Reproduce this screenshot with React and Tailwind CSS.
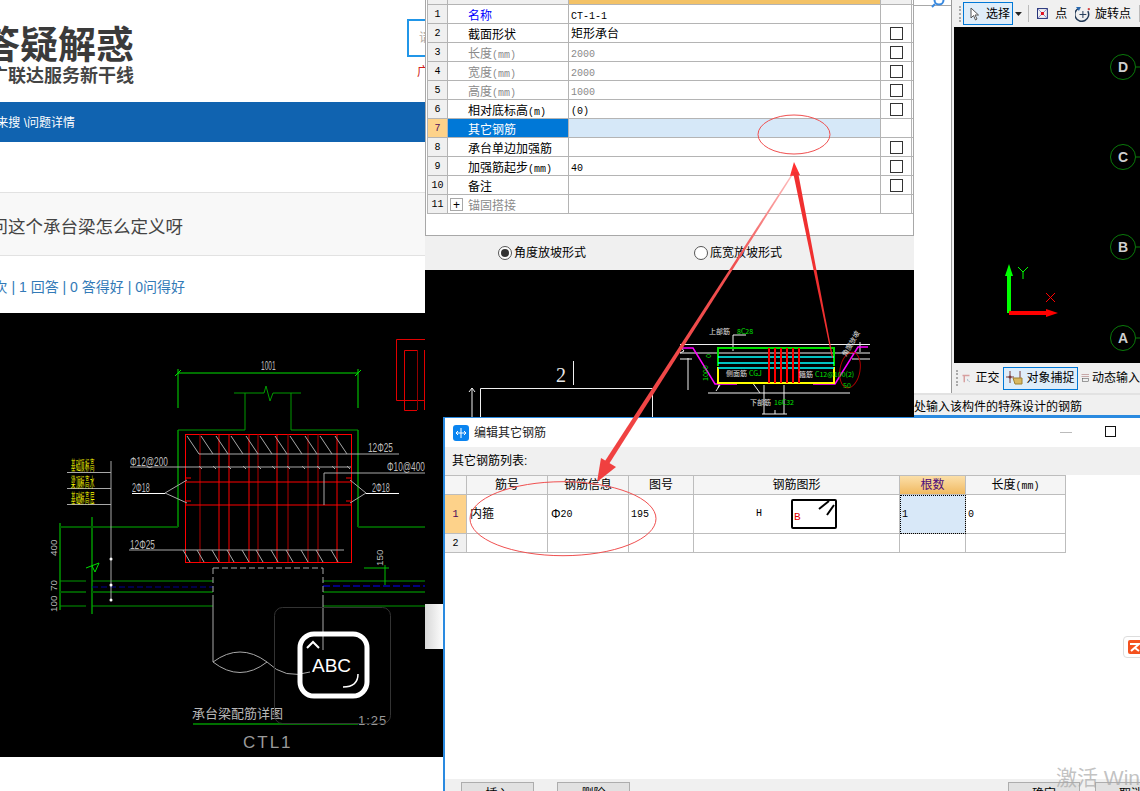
const FONT = "font-['Liberation_Sans','Noto_Sans_CJK_SC',sans-serif]";

function Mixed({ text, muted }) {
  const parts = text.split(/([\x20-\x7e]+)/).filter(Boolean);
  return (
    <span className={muted ? "text-[#8a8a8a]" : ""}>
      {parts.map((p, i) =>
        /^[\x20-\x7e]+$/.test(p) ? (
          <span key={i} className="font-['Liberation_Mono',monospace] text-[10px]">{p}</span>
        ) : (
          <span key={i} className="text-[12px]">{p}</span>
        )
      )}
    </span>
  );
}

const attrs = [
  { n: "1", name: "名称", val: "CT-1-1", blue: true, noBox: true },
  { n: "2", name: "截面形状", val: "矩形承台" },
  { n: "3", name: "长度(mm)", val: "2000", muted: true },
  { n: "4", name: "宽度(mm)", val: "2000", muted: true },
  { n: "5", name: "高度(mm)", val: "1000", muted: true },
  { n: "6", name: "相对底标高(m)", val: "(0)" },
  { n: "7", name: "其它钢筋", val: "", sel: true, noBox: true },
  { n: "8", name: "承台单边加强筋", val: "" },
  { n: "9", name: "加强筋起步(mm)", val: "40" },
  { n: "10", name: "备注", val: "" },
  { n: "11", name: "锚固搭接", val: "", muted: true, noBox: true, plus: true },
];

function AttrRow({ r }) {
  return (
    <div className="grid grid-cols-[21px_121px_312px_31px] h-[19px] border-b border-[#b4b4b4] leading-[22px] text-black">
      <div className={`border-r border-l border-[#b4b4b4] text-center leading-[17px] ${r.sel ? "bg-[#fdd28a] text-[#4b0a5a]" : "bg-[#f0f0f0]"}`}>
        <span className="font-['Liberation_Mono',monospace] text-[10px]">{r.n}</span>
      </div>
      <div className={`relative border-r border-[#b4b4b4] pl-[20px] whitespace-nowrap overflow-hidden ${r.sel ? "bg-[#0078d7] text-white" : ""} ${r.blue ? "text-[#0000ff]" : ""}`}>
        {r.plus && (
          <span className="absolute left-[2px] top-[3px] w-[13px] h-[13px] border border-[#a8a8a8] flex items-center justify-center text-[12px] leading-none text-black">+</span>
        )}
        <Mixed text={r.name} muted={r.muted} />
      </div>
      <div className={`border-r border-[#b4b4b4] pl-[2px] whitespace-nowrap leading-[20px] overflow-hidden ${r.sel ? "bg-[#d6e8f8]" : ""}`}>
        <Mixed text={r.val} muted={r.muted} />
      </div>
      <div className="border-r border-[#b4b4b4] flex items-center justify-center">
        {!r.noBox && <span className="w-[13px] h-[13px] border border-[#333] bg-white" />}
      </div>
    </div>
  );
}

function LeftCad() {
  const reds = [200, 219, 229, 249, 258, 277, 288, 308, 318, 337];
  const tops = [187, 201, 216, 231, 246, 260, 275, 290, 305, 320, 335];
  const cond = "font-['Liberation_Sans',sans-serif]";
  return (
    <svg viewBox="0 313 444 444" className="block w-[444px] h-[444px] bg-black" fill="none">
      <g stroke="#00e000" strokeWidth="1">
        <path d="M178 373H358M178 369V408M358 369V408M175 376L181 370M355 376L361 370" />
        <path d="M178 430V527M358 430V527" />
        <path d="M60 523V610M92 517V614M86 568L99 563L95 572L92 566" />
      </g>
      <g stroke="#009a00" strokeWidth="1">
        <path d="M234 393H264L266 386L270 401L273 393H301M245 393V430H178M291 393V430H358" />
        <path d="M60 581H86M92 581H213M60 606H86M92 606H213M323 581H425M323 606H425" />
        <path d="M60 527H178M358 527H425M60 592H86M92 592H213M323 592H425" stroke="#005a00" strokeWidth="2" />
        <path d="M364 568H389M385 565V585" stroke="#00c000" />
      </g>
      <path d="M92 587H213" stroke="#000090" strokeDasharray="6 3" />
      <path d="M323 586H425" stroke="#0000ff" strokeDasharray="7 3" />
      <g stroke="#ff0000" strokeWidth="1">
        <rect x="185.500" y="434.500" width="166" height="128" />
        {reds.map((x) => (
          <path key={x} d={`M${x} 434V562`} stroke={x % 2 ? "#ff0000" : "#b00000"} />
        ))}
        <path d="M185 482H351M185 505H351" />
        <path d="M185 478H191M185 501H191M346 478H352M346 501H352" />
      </g>
      <path d="M396.500 339.500H425M396.500 339.500V400.500H425M404.500 350.500H417M404.500 350.500V410.500H417M424.500 350V410" stroke="#e00000" />
      <path d="M417.500 350V410" stroke="#900000" />
      <g stroke="#a8a8a8" strokeWidth="1">
        <path d="M199 454H399M130 467H351M324 473H425M324 473V505M129 550H344M111 461V600" />
        <path d="M67 472.500H111M67 488.500H111M67 504.500H111" />
        {tops.map((x) => (
          <path key={x} d={`M${x} 436L${x + 12} 454`} />
        ))}
        {tops.map((x) => (
          <path key={`b${x}`} d={`M${x - 4} 550L${x + 3} 562`} />
        ))}
        {tops.map((x) => (
          <path key={`m${x}`} d={`M${x + 12} 466l3 3`} />
        ))}
        <path d="M165 493L187 480M165 493L187 503M366 493L350 480M366 493L350 503" />
        <path d="M213 568H323M213 568V595M323 568V595" strokeDasharray="6 3" />
        <path d="M213 595V662M323 595V650" />
        <path d="M213 662Q240 642 267 662Q285 680 310 672M213 662Q240 683 267 662" />
      </g>
      <path d="M132 493.500H165M366 493.500H399" stroke="#ffffff" />
      <circle cx="111" cy="559" r="1.500" fill="#fff" />
      <circle cx="111" cy="585" r="1.500" fill="#fff" />
      <circle cx="111" cy="600" r="1.500" fill="#fff" />
      <g fill="#bdbdbd" fontSize="11" className={cond}>
        <text transform="translate(261 370) scale(0.6 1.1)">1001</text>
        <text transform="translate(368 452) scale(0.75 1.1)">12Φ25</text>
        <text transform="translate(130 466) scale(0.75 1.1)">Φ12@200</text>
        <text transform="translate(387 471) scale(0.75 1.1)">Φ10@400</text>
        <text transform="translate(132 492) scale(0.65 1.1)">2Φ18</text>
        <text transform="translate(372 492) scale(0.65 1.1)">2Φ18</text>
        <text transform="translate(130 549) scale(0.75 1.1)">12Φ25</text>
        <text transform="translate(57 556) rotate(-90) scale(0.9 0.9)">400</text>
        <text transform="translate(57 591) rotate(-90) scale(0.9 0.9)">70</text>
        <text transform="translate(57 612) rotate(-90) scale(0.9 0.9)">100</text>
        <text transform="translate(383 566) rotate(-90) scale(0.9 0.9)">150</text>
      </g>
      <g fill="#ffff00" fontSize="12" className={cond}>
        <text transform="translate(71 470) scale(0.38 1.2)">基础顶标高</text>
        <text transform="translate(71 487) scale(0.38 1.2)">梁顶标高水</text>
        <text transform="translate(71 503) scale(0.38 1.2)">基础标高层</text>
      </g>
      <text x="192" y="718" fill="#b8b8b8" fontSize="13">承台梁配筋详图</text>
      <path d="M193 724H358" stroke="#00e000" />
      <text x="358" y="725" fill="#9a9a9a" fontSize="13" className={cond} letterSpacing="1">1:25</text>
      <text x="243" y="748" fill="#9a9a9a" fontSize="17" className={cond} letterSpacing="2">CTL1</text>
      <rect x="274.500" y="607.500" width="116" height="116" rx="8" stroke="#333" />
      <rect x="300" y="634" width="67" height="62" rx="14" stroke="#fff" strokeWidth="5" />
      <path d="M307 648L313 642L319 648" stroke="#fff" strokeWidth="2" />
      <text x="312" y="672" fill="#fff" fontSize="19" className={cond}>ABC</text>
      <path d="M358 674Q358 687 343 687" stroke="#fff" strokeWidth="1.500" />
    </svg>
  );
}

function MidCad() {
  const rs = [769, 775, 781, 787, 793, 799];
  return (
    <svg viewBox="425 270 489 147" className="block w-[489px] h-[147px] bg-black" fill="none">
      <text x="556" y="382" fill="#e8e8e8" fontSize="20" fontFamily="Liberation Serif, serif">2</text>
      <g stroke="#f0f0f0">
        <path d="M573.500 361V385M480.500 417V388.500H652.500V417M472 388V417M469 392L472 388L475 392" />
        <path d="M680 344.500H870M680 346L684 351L680 353H870M680 359H692M852 359H870" />
        <path d="M733 335H746M733 335V351M708 393H850M720 382L718 388M752 382L760 393M764 385V414M784 385V414" />
        <path d="M762 414H787M775 414V410M688 358V390M860 342V352M720 385L716 391" />
      </g>
      <path d="M682 348H693L715 384H737M868 347H858L835 384H813" stroke="#ff00ff" strokeWidth="1.500" />
      <path d="M718 366V348H834V366" stroke="#00e000" strokeWidth="2" />
      <path d="M718 367V383H834V367" stroke="#ffff00" strokeWidth="2" />
      <path d="M718 357H834M718 363H834M718 368H834" stroke="#00ffff" strokeWidth="1.500" />
      {rs.map((x) => (
        <path key={x} d={`M${x} 348V383`} stroke="#ff0000" strokeWidth="2" />
      ))}
      <ellipse cx="850" cy="370" rx="10" ry="18" stroke="#b00000" transform="rotate(10 850 370)" />
      <g fontSize="7" fontFamily="Noto Sans CJK SC, sans-serif">
        <text x="709" y="334" fill="#e0e0e0">上部筋</text>
        <text x="737" y="334" fill="#00e000">8C28</text>
        <text x="726" y="376" fill="#e0e0e0">侧面筋</text>
        <text x="749" y="376" fill="#00e000">CGJ</text>
        <text x="799" y="377" fill="#e0e0e0">箍筋</text>
        <text x="815" y="377" fill="#00e000">C12@100(2)</text>
        <text x="750" y="405" fill="#e0e0e0">下部筋</text>
        <text x="774" y="405" fill="#00e000">16C32</text>
        <text x="843" y="388" fill="#00e000">50</text>
        <text transform="translate(708 381) rotate(-90)" fill="#00e000">1000</text>
        <text transform="translate(711 358) rotate(-90)" fill="#00e000">0</text>
        <text transform="translate(846 357) rotate(-60)" fill="#e0e0e0">角度放坡</text>
      </g>
    </svg>
  );
}

function RightCanvas() {
  const axes = [["D", 67], ["C", 157], ["B", 247], ["A", 338]];
  return (
    <svg viewBox="954 27 186 336" className="block w-[186px] h-[336px] bg-black" fill="none">
      {axes.map(([l, y]) => (
        <g key={l}>
          <circle cx="1123" cy={y} r="12.500" stroke="#0a7a0a" />
          <path d={`M1136 ${y}H1140`} stroke="#0a7a0a" />
          <text x="1123" y={y + 5} textAnchor="middle" fill="#cfcfcf" fontSize="14" fontWeight="700" fontFamily="Liberation Sans, sans-serif">{l}</text>
        </g>
      ))}
      <path d="M1009 313V271" stroke="#00ff00" strokeWidth="4" />
      <path d="M1009 264L1013 276H1005Z" fill="#00ff00" />
      <path d="M1009 313H1048" stroke="#ff0000" strokeWidth="4" />
      <path d="M1058 313L1046 309V317Z" fill="#ff0000" />
      <path d="M1018 267L1023 272L1028 267M1023 272V279" stroke="#00ff00" />
      <path d="M1046 293L1055 302M1055 293L1046 302" stroke="#ff0000" />
    </svg>
  );
}

function Toolbar() {
  return (
    <div className="flex items-center h-[27px] bg-[#f0f0f0] pl-[2px] text-[12px] text-black">
      <span className="w-[2px] h-[16px] border-l-2 border-dotted border-[#aaa] ml-[5px]" />
      <div className="ml-[2px] w-[51px] h-[23px] border border-[#0078d7] bg-[#dfedf9] flex items-center pl-[6px] gap-[6px] text-[12px]">
        <svg width="10" height="14" viewBox="0 0 10 14" fill="none"><path d="M1 1V11L3.500 8.500L5.500 13L7 12L5 8H8.500Z" stroke="#555" fill="#fff" /></svg>
        <span>选择</span>
      </div>
      <svg width="8" height="4" viewBox="0 0 8 4" className="ml-[2px]"><path d="M0 0H7L3.500 4Z" fill="#222" /></svg>
      <span className="ml-[5px] h-[17px] border-l border-[#bcbcbc]" />
      <svg width="11" height="11" viewBox="0 0 11 11" fill="none" className="ml-[8px]"><rect x="0.500" y="0.500" width="10" height="10" stroke="#24327a" /><path d="M1 1L10 10M10 1L1 10" stroke="#8888c8" /><rect x="4" y="4" width="3" height="3" fill="#e01020" /></svg>
      <span className="ml-[7px]">点</span>
      <svg width="16" height="16" viewBox="0 0 16 16" fill="none" className="ml-[8px]"><path d="M4 2A7 7 0 1 0 13 5" stroke="#233b58" strokeWidth="1.500" /><path d="M1 1L6 1L4 5Z" fill="#2a6ab0" /><path d="M8 5V12M4.500 8.500H11.500" stroke="#233b58" /><circle cx="14" cy="3" r="1.200" fill="#d04040" /></svg>
      <span className="ml-[4px] whitespace-nowrap">旋转点</span>
      <span className="ml-[8px] h-[17px] border-l border-[#bcbcbc]" />
    </div>
  );
}

function BottomBar() {
  return (
    <div className="flex items-center h-[30px] bg-[#f0f0f0] text-[12px] text-black whitespace-nowrap overflow-hidden">
      <span className="w-[2px] h-[16px] border-l-2 border-dotted border-[#aaa] ml-[4px]" />
      <svg width="17" height="17" viewBox="0 0 17 17" fill="none" className="ml-[4px]"><path d="M1 2.500H15M4.500 2V16" stroke="#d8a0a0" strokeWidth="3" /><path d="M10 9L13 12L11 13Z" fill="#7a9ab8" /><path d="M13 13L16 16" stroke="#6a8aa8" /></svg>
      <span className="ml-[5px]">正交</span>
      <div className="ml-[3px] w-[75px] h-[23px] border border-[#0078d7] bg-[#dfedf9] flex items-center pl-[2px] gap-[3px] shrink-0">
        <svg width="18" height="18" viewBox="0 0 18 18" fill="none"><path d="M4 2V14M14 2V14M0 8H8" stroke="#7a3a3a" /><circle cx="4" cy="8" r="1.500" fill="#7a3a3a" /><path d="M7 9H16V15H9Z" fill="#d9b860" stroke="#a08030" /></svg>
        <span>对象捕捉</span>
      </div>
      <svg width="17" height="16" viewBox="0 0 17 16" fill="none" className="ml-[3px]"><path d="M1 1H16M1 5H16" stroke="#a06060" /><rect x="2.500" y="8.500" width="12" height="6" stroke="#444" /></svg>
      <span className="ml-[3px]">动态输入</span>
    </div>
  );
}

const cols = "grid grid-cols-[22px_81px_81px_65px_206px_66px_100px]";
const cell = "border-r border-b border-[#bdbdbd] flex items-center";

function Dialog() {
  return (
    <div className="absolute left-[443px] top-[417px] w-[697px] h-[374px] bg-white border-l-2 border-t border-[#2a8ae0] flex flex-col text-black text-[12px]">
      <div className="h-[29px] shrink-0 flex items-center pl-[8px] relative">
        <svg width="16" height="16" viewBox="0 0 16 16" fill="none"><rect width="16" height="16" rx="3" fill="#0a84f0" /><path d="M8 3V13M3 8H13M5 6L3 8L5 10M11 6L13 8L11 10" stroke="#fff" /></svg>
        <span className="ml-[5px] text-[12px] text-[#222]">编辑其它钢筋</span>
        <span className="absolute left-[615px] top-[14px] w-[12px] border-t border-[#bbb]" />
        <span className="absolute left-[660px] top-[8px] w-[11px] h-[11px] border border-[#111]" />
      </div>
      <div className="h-[28px] shrink-0 bg-[#f0f0f0] pl-[7px] flex items-center">其它钢筋列表:</div>
      <div className="flex-1">
        <div className={`${cols} h-[20px] w-[621px] border-t border-[#bdbdbd] bg-[#f5f5f5] text-center`}>
          <div className={cell}></div>
          {["筋号", "钢筋信息", "图号", "钢筋图形"].map((h) => (
            <div key={h} className={`${cell} justify-center`}>{h}</div>
          ))}
          <div className={`${cell} justify-center bg-gradient-to-b from-[#fbdfa8] to-[#f0b95f] text-[#4b0a7a]`}>根数</div>
          <div className={`${cell} justify-center`}><Mixed text="长度(mm)" /></div>
        </div>
        <div className={`${cols} h-[39px] w-[621px]`}>
          <div className={`${cell} justify-center bg-[#fdd28a] text-[#4b0a5a] font-['Liberation_Mono',monospace] text-[10px]`}>1</div>
          <div className={`${cell} pl-[3px]`}>内箍</div>
          <div className={`${cell} pl-[3px]`}>Φ<span className="font-['Liberation_Mono',monospace] text-[10px]">20</span></div>
          <div className={`${cell} pl-[2px] font-['Liberation_Mono',monospace] text-[10px]`}>195</div>
          <div className={`${cell} relative`}>
            <span className="absolute left-[62px] top-[11px] font-['Liberation_Mono',monospace] text-[10px]">H</span>
            <svg width="46" height="30" viewBox="0 0 46 30" fill="none" className="absolute left-[97px] top-[4px]">
              <rect x="1" y="1" width="44" height="28" rx="1" stroke="#000" strokeWidth="2" />
              <path d="M28 10L38 2M36 16L43 6" stroke="#000" strokeWidth="2" />
              <text x="3" y="21" fill="#e00000" fontSize="11" fontFamily="Liberation Mono, monospace">B</text>
            </svg>
          </div>
          <div className="border-r border-b border-[#bdbdbd] flex items-center bg-[#d8e8f8] outline-1 outline-dotted outline-black -outline-offset-1 pl-[2px] font-['Liberation_Mono',monospace] text-[10px]">1</div>
          <div className={`${cell} pl-[2px] font-['Liberation_Mono',monospace] text-[10px]`}>0</div>
        </div>
        <div className={`${cols} h-[19px] w-[621px]`}>
          <div className={`${cell} justify-center bg-[#f0f0f0] font-['Liberation_Mono',monospace] text-[10px]`}>2</div>
          <div className={cell} /><div className={cell} /><div className={cell} /><div className={cell} /><div className={cell} /><div className={cell} />
        </div>
      </div>
      <div className="h-[12px] shrink-0 bg-[#f0f0f0] flex items-start pt-[3px] overflow-visible">
        <div className="ml-[16px] w-[73px] h-[24px] shrink-0 border border-[#adadad] bg-[#e1e1e1] text-center leading-[22px]">插入</div>
        <div className="ml-[23px] w-[73px] h-[24px] shrink-0 border border-[#adadad] bg-[#e1e1e1] text-center leading-[22px]">删除</div>
        <div className="ml-[378px] w-[72px] h-[24px] shrink-0 border border-[#adadad] bg-[#e1e1e1] text-center leading-[22px]">确定</div>
        <div className="ml-[15px] w-[72px] h-[24px] shrink-0 border border-[#adadad] bg-[#e1e1e1] text-center leading-[22px]">取消</div>
      </div>
    </div>
  );
}

export default function App() {
  return (
    <div className={`relative w-[1140px] h-[791px] overflow-hidden bg-white ${FONT}`}>
      {/* web page window */}
      <div className="absolute left-0 top-0 w-[444px]">
        <div className="w-[425px] h-[102px] relative overflow-hidden">
          <div className="w-[134px] pt-[23px] flex flex-col items-end overflow-hidden whitespace-nowrap">
            <div className="text-[38px] leading-[44px] font-bold text-[#3a3a3a]">答疑解惑</div>
            <div className="text-[18px] leading-[20px] font-bold text-[#444] -mt-[1px]">广联达服务新干线</div>
          </div>
          <div className="absolute left-[407px] top-[19px] w-[30px] h-[38px] border-2 border-[#2196e8] pl-[10px] pt-[8px] text-[12px] text-[#b0a8a0]">请</div>
          <div className="absolute left-[417px] top-[63px] text-[12px] text-[#d02020]">广</div>
        </div>
        <div className="w-[425px] h-[40px] bg-[#1063b0] flex items-center justify-end pr-[350px] pt-[2px] text-[12px] text-white whitespace-nowrap overflow-hidden">来搜 \问题详情</div>
        <div className="w-[425px] h-[50px]" />
        <div className="w-[425px] h-[64px] bg-[#f8f8f8] border-y border-[#e2e2e2] flex items-center justify-end pr-[242px] pt-[6px] text-[17.500px] text-[#444] whitespace-nowrap overflow-hidden">问这个承台梁怎么定义呀</div>
        <div className="w-[425px] h-[57px] flex items-center justify-end pr-[240px] pt-[5px] text-[14px] text-[#337ab7] whitespace-nowrap overflow-hidden">次 | 1 回答 | 0 答得好 | 0问得好</div>
        <LeftCad />
        <div className="absolute left-[425px] top-[604px] w-[19px] h-[45px] bg-gradient-to-r from-[#d8d8d8] to-white" />
      </div>

      {/* attribute window */}
      <div className="absolute left-[425px] top-0 w-[489px] flex flex-col">
        <div className="h-[236px] bg-white border-x border-b border-[#a8a8a8] pl-px text-[12px]">
          <div className="grid grid-cols-[21px_121px_312px_31px] h-[5px] border-b border-[#b4b4b4]">
            <div className="bg-[#f0f0f0] border-x border-[#b4b4b4]" />
            <div className="bg-[#f0f0f0] border-r border-[#b4b4b4]" />
            <div className="bg-[#f3c267] border-r border-[#b4b4b4]" />
            <div className="bg-[#f0f0f0] border-r border-[#b4b4b4]" />
          </div>
          {attrs.map((r) => <AttrRow key={r.n} r={r} />)}
        </div>
        <div className="h-[34px] bg-[#f0f0f0] relative flex items-center text-[12px] text-black">
          <span className="ml-[73px] w-[14px] h-[14px] rounded-full border border-[#555] bg-white flex items-center justify-center">
            <span className="w-[8px] h-[8px] rounded-full bg-[#333]" />
          </span>
          <span className="ml-[2px]">角度放坡形式</span>
          <span className="ml-[108px] w-[14px] h-[14px] rounded-full border border-[#555] bg-white" />
          <span className="ml-[2px]">底宽放坡形式</span>
        </div>
        <MidCad />
      </div>

      {/* software right side */}
      <div className="absolute left-[914px] top-0 w-[226px] h-[417px] flex flex-col bg-[#f0f0f0]">
        <div className="flex h-[393px]">
          <div className="w-[38px] bg-white border-r border-[#9a9a9a] relative">
            <div className="h-[12px] border-b border-[#a8a8a8] flex justify-end pr-[6px] -mt-[6px]">
              <svg width="14" height="14" viewBox="0 0 14 14" fill="none"><circle cx="8" cy="6" r="4.500" stroke="#3a8ae0" strokeWidth="2" /><path d="M4 10L1 13" stroke="#3a8ae0" strokeWidth="2" /></svg>
            </div>
          </div>
          <div className="w-[188px] flex flex-col">
            <Toolbar />
            <div className="pl-[2px]"><RightCanvas /></div>
            <BottomBar />
          </div>
        </div>
        <div className="h-[24px] border-t-2 border-[#e2e2e2] border-b-2 border-b-[#2a8ae0] flex items-center pt-[3px] text-[12px] text-black whitespace-nowrap">处输入该构件的特殊设计的钢筋</div>
      </div>

      <Dialog />

      {/* floating orange badge */}
      <div className="absolute left-[1123px] top-[636px] w-[22px] h-[22px] rounded-[4px] bg-white border border-[#ddd] pl-[4px] pt-[3px]">
        <div className="w-[14px] h-[14px] bg-[#f4511e] rounded-[2px]" >
          <svg width="14" height="14" viewBox="0 0 14 14" fill="none"><path d="M2 4H11L3 11M7 8L11 11" stroke="#fff" strokeWidth="2" /></svg>
        </div>
      </div>

      {/* Watermark */}
      <div className="absolute left-[1056px] top-[762px] text-[21px] text-[#a8a8a8]/70 whitespace-nowrap">激活 Win</div>

      {/* red annotations over the windows */}
      <svg viewBox="0 0 1140 791" className="absolute left-0 top-0 w-[1140px] h-[791px] pointer-events-none" fill="none">
        <defs>
          <linearGradient id="fade" x1="0" y1="0" x2="0" y2="1">
            <stop offset="0" stopColor="#ffc0c0" />
            <stop offset="0.3" stopColor="#f05050" />
            <stop offset="1" stopColor="#f04040" />
          </linearGradient>
        </defs>
        <ellipse cx="794" cy="134.500" rx="36" ry="19.500" stroke="#f05050" />
        <ellipse cx="563" cy="518.700" rx="93" ry="37" stroke="#f05050" />
        <path d="M793 172L794 173L609 464L605 461Z" fill="url(#fade)" />
        <path d="M597 482L601 458L616 467Z" fill="#f04040" />
        <path d="M794 162L800 175L790 176Z" fill="#ff3030" />
        <path d="M793 172L798 172L833 358L832 358Z" fill="#f03030" />
      </svg>
    </div>
  );
}
